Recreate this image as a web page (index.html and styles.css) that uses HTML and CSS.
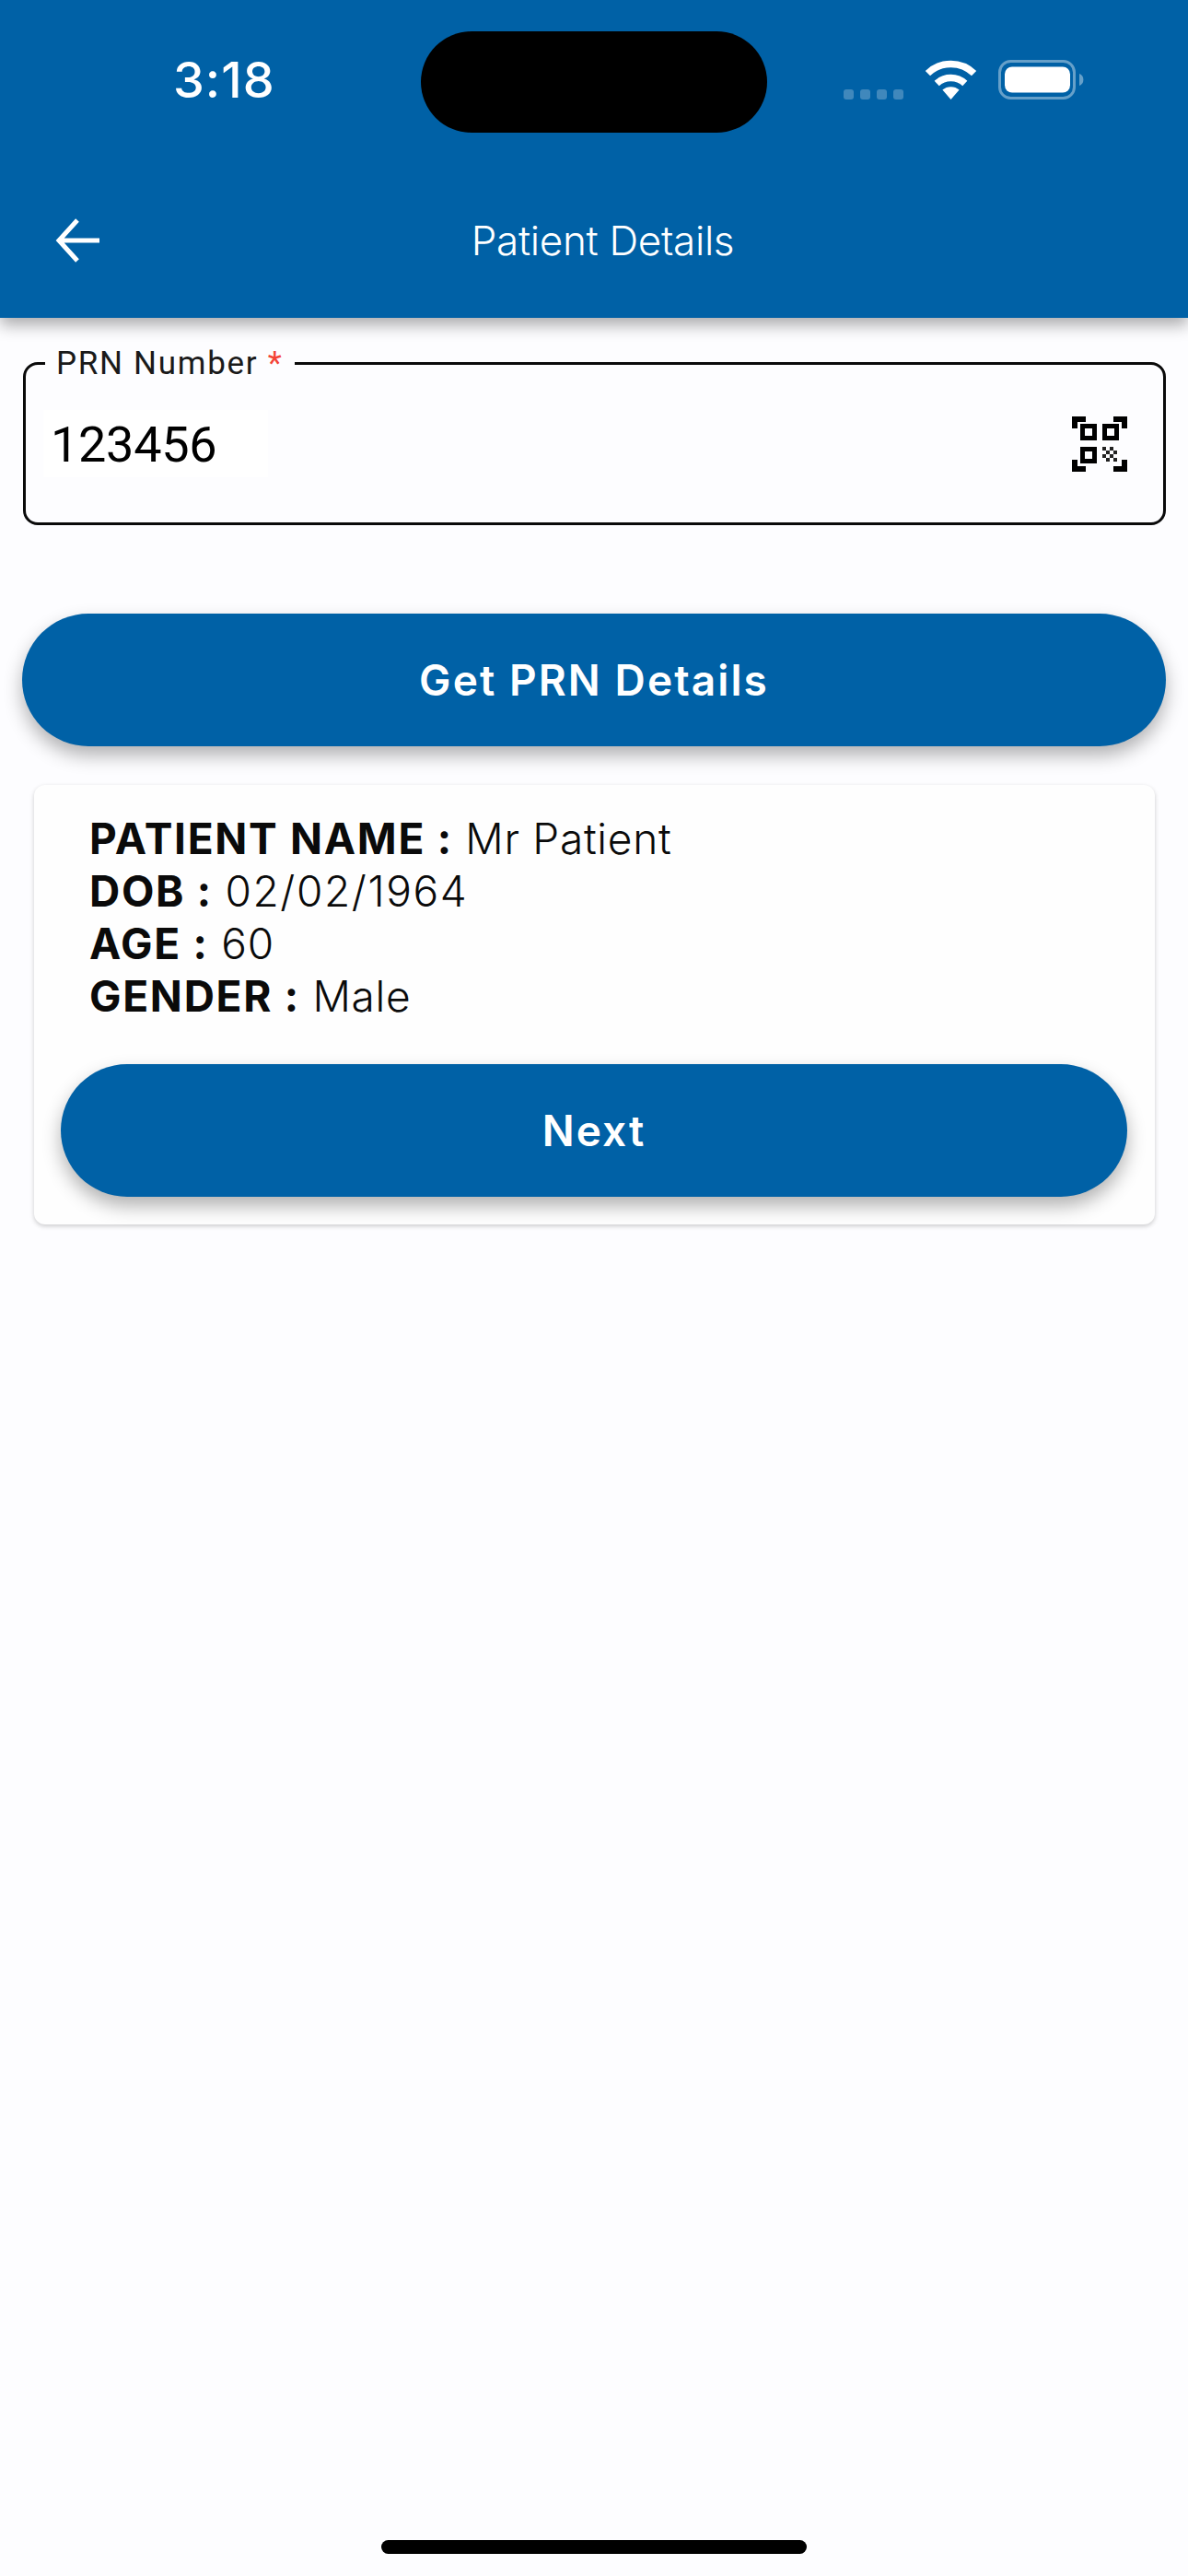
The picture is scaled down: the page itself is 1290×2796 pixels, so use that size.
FILE: index.html
```html
<!DOCTYPE html>
<html>
    <head>
        <meta charset="utf-8" />
        <title>Patient Details</title>
        <link rel="stylesheet" href="styles.css">
    </head>
    <body>
        <header class="app_header">
            <div class="status_bar">
                <span class="status_time">3:18</span>
                <div class="island"></div>
                <div class="status_icons">
                    <div class="signal_dots"><i></i><i></i><i></i><i></i></div>
                    <svg class="wifi_icon" width="57" height="43" viewBox="0 0 57 43">
                        <path d="M28.5 43 L19.4 32.5 A14 14 0 0 1 37.6 32.5 Z" fill="#fff" />
                        <path d="M13.2 25.6 A22.5 22.5 0 0 1 43.8 25.6" fill="none" stroke="#fff" stroke-width="7.5" />
                        <path d="M3.4 14.6 A36 36 0 0 1 53.6 14.6" fill="none" stroke="#fff" stroke-width="7.5" />
                    </svg>
                    <svg class="battery_icon" width="94" height="43" viewBox="0 0 94 43">
                        <rect x="1.5" y="1.5" width="81" height="40" rx="12" fill="none" stroke="#fff" stroke-opacity="0.4" stroke-width="3" />
                        <rect x="7" y="7.5" width="71" height="28" rx="8" fill="#fff" />
                        <path d="M88 15 A7 7 0 0 1 88 28 Z" fill="#fff" fill-opacity="0.4" />
                    </svg>
                </div>
            </div>
            <div class="nav_bar">
                <svg class="back_icon" width="48" height="48" viewBox="0 0 48 48">
                    <path d="M24 2 L4 24 L24 46 M4 24 H48" fill="none" stroke="#fff" stroke-width="5" />
                </svg>
                <div class="nav_title">Patient Details</div>
            </div>
        </header>

        <main class="content">
            <div class="prn_field">
                <label class="prn_label">PRN Number <span class="required">*</span></label>
                <div class="prn_value">123456</div>
                <svg class="qr_icon" width="60" height="60" viewBox="0 0 60 60">
                    <path d="M0 0 H15 V6 H6 V13 H0 Z M60 0 H45 V6 H54 V13 H60 Z M0 60 H15 V54 H6 V47 H0 Z M60 60 H45 V54 H54 V47 H60 Z" fill="#000" />
                    <path d="M9 8 H27 V26 H9 Z M14 13 V21 H22 V13 Z M33 8 H51 V26 H33 Z M38 13 V21 H46 V13 Z M9 33 H27 V51 H9 Z M14 38 V46 H22 V38 Z" fill="#000" fill-rule="evenodd" />
                    <path d="M33 33 h4 v4 h-4 Z M41 33 h4 v4 h-4 Z M37 37 h4 v4 h-4 Z M45 37 h4 v4 h-4 Z M33 41 h4 v4 h-4 Z M41 41 h4 v4 h-4 Z M37 45 h4 v4 h-4 Z M45 45 h4 v4 h-4 Z" fill="#222" />
                </svg>
            </div>

            <button class="pill_btn get_btn">Get PRN Details</button>

            <section class="patient_card">
                <div class="patient_info">
                    <div><b>PATIENT NAME :</b> Mr Patient</div>
                    <div><b>DOB :</b> <span class="date_value">02/02/1964</span></div>
                    <div><b>AGE :</b> 60</div>
                    <div><b>GENDER :</b> Male</div>
                </div>
                <button class="pill_btn next_btn">Next</button>
            </section>
        </main>

        <div class="home_bar"></div>
    </body>
</html>
```

FILE: styles.css
```css
html, body {
    width: 1290px;
    height: 2796px;
    margin: 0px;
    overflow: hidden;
}

body {
    display: flex;
    flex-direction: column;
    background-color: #fdfdff;
    font-family: "Inter", "Liberation Sans", sans-serif;
    font-feature-settings: "calt" 0;
    color: #0a0a0a;
}

.app_header {
    height: 345px;
    flex-shrink: 0;
    background-color: #0061a6;
    box-shadow: 0px 8px 16px rgba(0, 0, 0, 0.32);
    color: #fff;
}

.status_bar {
    display: flex;
    align-items: flex-start;
    padding: 34px 0px 0px 188px;
}

.status_time {
    width: 269px;
    font-size: 54px;
    font-weight: 500;
    line-height: 106px;
    letter-spacing: 1px;
}

.island {
    width: 376px;
    height: 110px;
    border-radius: 55px;
    background-color: #000;
}

.status_icons {
    display: flex;
    align-items: flex-end;
    margin: 31px 0px 0px 83px;
}

.signal_dots {
    display: flex;
    gap: 7px;
    margin-right: 23px;
}

.signal_dots i {
    width: 11px;
    height: 11px;
    border-radius: 3px;
    background-color: rgba(255, 255, 255, 0.25);
}

.wifi_icon {
    display: block;
    margin-right: 23px;
}

.battery_icon {
    display: block;
}

.nav_bar {
    display: flex;
    align-items: center;
    height: 64px;
    margin-top: 85px;
    padding: 0px 89px 0px 60px;
}

.back_icon {
    display: block;
}

.nav_title {
    flex: 1;
    text-align: center;
    font-size: 44px;
    font-weight: 300;
    letter-spacing: -0.3px;
}

.content {
    flex: 1;
    padding: 48px 24px 0px 24px;
}

.prn_field {
    position: relative;
    display: flex;
    align-items: center;
    justify-content: space-between;
    box-sizing: border-box;
    height: 177px;
    margin-left: 1px;
    padding: 0px 39px 0px 19px;
    border: 3px solid #0a0a0a;
    border-radius: 16px;
}

.prn_label {
    position: absolute;
    left: 21px;
    top: -21px;
    padding: 0px 12px;
    background-color: #fdfdff;
    font-family: "Roboto", sans-serif;
    font-size: 35px;
    line-height: 40px;
    color: #1a1a1a;
    letter-spacing: 1.7px;
}

.required {
    color: #f44336;
}

.prn_value {
    box-sizing: border-box;
    width: 244px;
    height: 73px;
    padding-left: 8px;
    background-color: #fff;
    font-family: "Roboto", sans-serif;
    font-size: 54px;
    line-height: 75px;
    letter-spacing: -0.3px;
    color: #000;
}

.qr_icon {
    display: block;
}

.pill_btn {
    display: block;
    height: 144px;
    border: none;
    border-radius: 72px;
    background-color: #0061a6;
    box-shadow: 0px 10px 20px rgba(0, 0, 0, 0.3);
    color: #fff;
    font-family: "Inter", sans-serif;
    font-feature-settings: "calt" 0;
    font-size: 46px;
    font-weight: 600;
    letter-spacing: 2.1px;
}

.get_btn {
    width: 100%;
    margin-top: 96px;
}

.patient_card {
    margin: 42px 12px 0px 13px;
    padding: 30px 30px 30px 29px;
    border-radius: 12px;
    background-color: #fefefe;
    box-shadow: 0px 2px 5px rgba(0, 0, 0, 0.2);
}

.patient_info {
    padding-left: 31px;
    font-size: 46px;
    font-weight: 300;
    line-height: 57px;
    letter-spacing: 0.7px;
}

.patient_info b {
    font-weight: 700;
    letter-spacing: 1.7px;
}

.date_value {
    letter-spacing: 1.6px;
}

.next_btn {
    width: 100%;
    margin-top: 45px;
}

.home_bar {
    flex-shrink: 0;
    width: 462px;
    height: 15px;
    margin: 0px auto 24px auto;
    border-radius: 8px;
    background-color: #000;
}
```
